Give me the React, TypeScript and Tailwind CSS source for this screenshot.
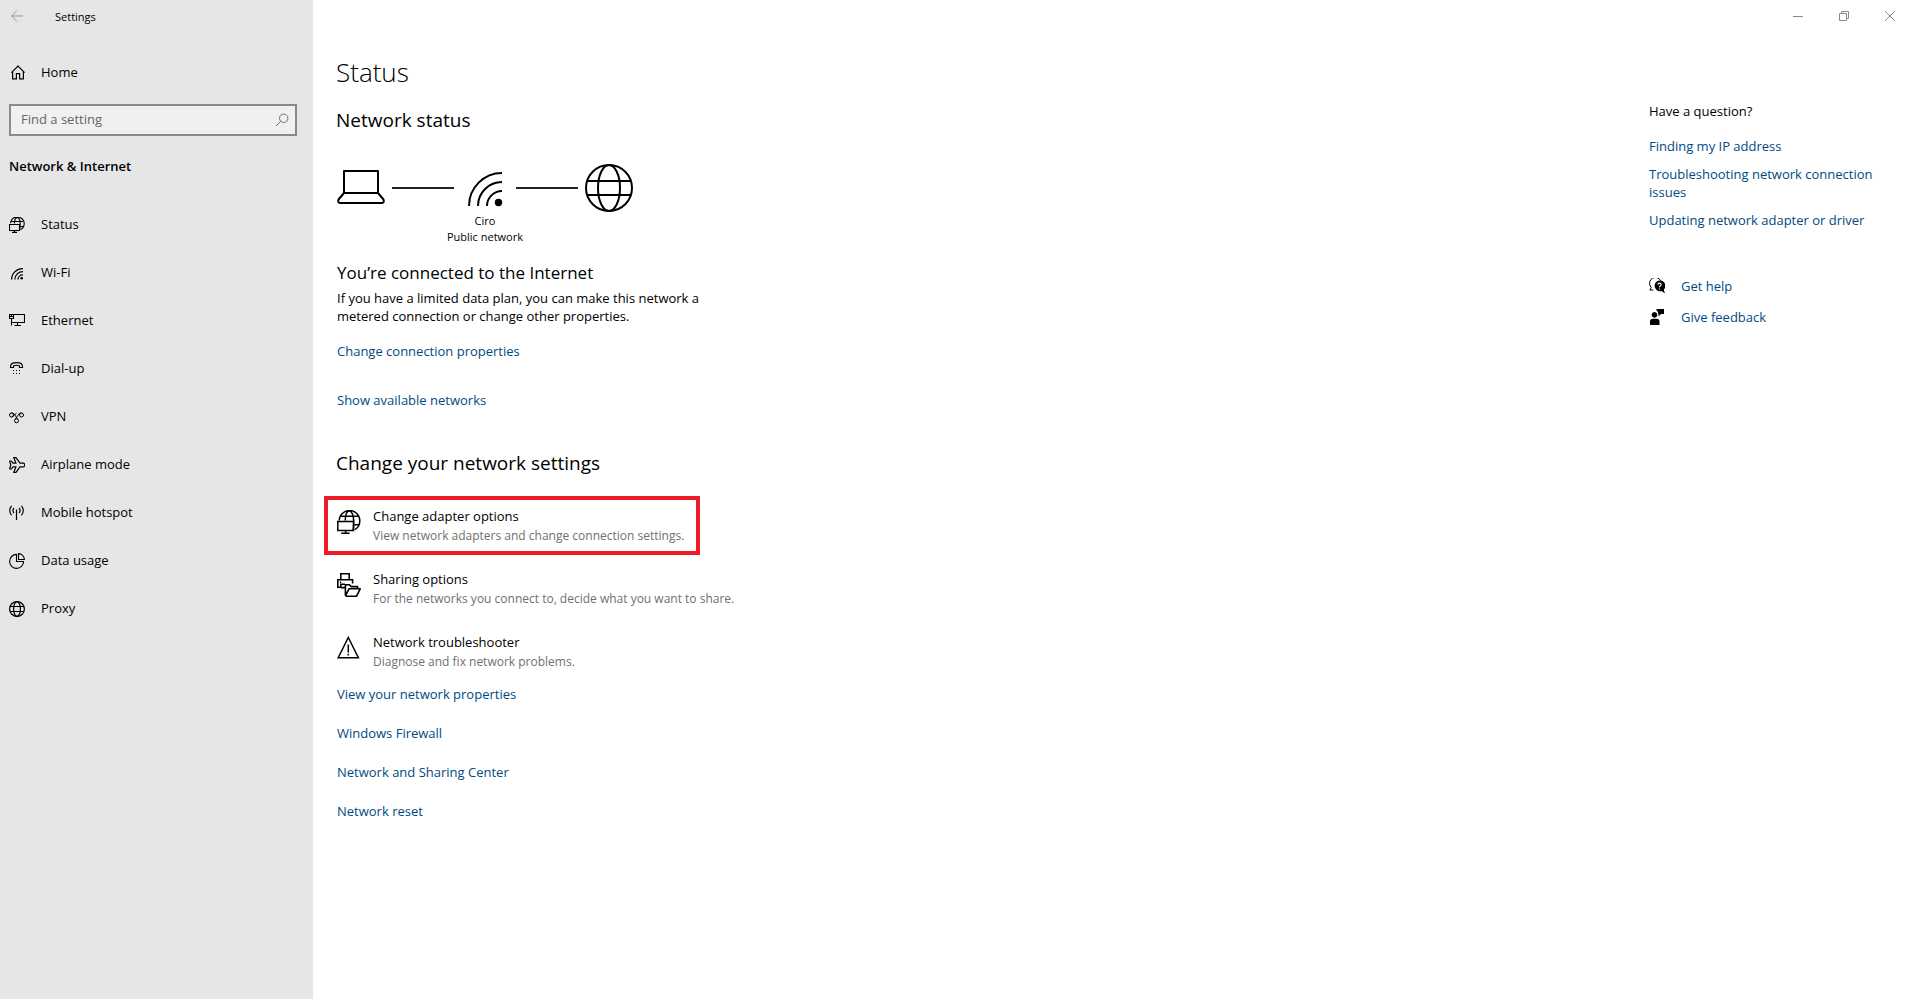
import type { ReactNode } from 'react';

type IconProps = { size?: number; stroke?: number; className?: string; children: ReactNode };

function Icon({ size = 16, stroke = 1, className = '', children }: IconProps) {
  return (
    <svg
      width={size}
      height={size}
      viewBox={`0 0 ${size} ${size}`}
      fill="none"
      stroke="currentColor"
      strokeWidth={stroke}
      className={`shrink-0 ${className}`}
      aria-hidden="true"
    >
      {children}
    </svg>
  );
}

const navItems: { label: string; icon: ReactNode }[] = [
  {
    label: 'Status',
    icon: (
      <Icon stroke={1.1}>
        <path d="M1.6 6.2A6.8 6.8 0 1 1 11.5 12.7M5.4 6.5C5.6 3 6.6 0.6 8.2 0.6S11.2 3 11.2 7C11.2 9.5 11 11.5 10.4 13M2.4 4.5H14M11.5 9.5H14.4" />
        <path d="M0.5 7.5H10.5V13.5H0.5ZM5.5 13.5V15.5M3 15.4H8" />
      </Icon>
    ),
  },
  {
    label: 'Wi-Fi',
    icon: (
      <Icon stroke={1.3}>
        <path d="M2.6 14.5A11 11 0 0 1 14 3.6M5.8 14.5A8 8 0 0 1 14 6.7M8.9 14.5A5 5 0 0 1 14 9.8" />
        <circle cx="12.7" cy="13.2" r="1.3" fill="currentColor" stroke="none" />
      </Icon>
    ),
  },
  {
    label: 'Ethernet',
    icon: (
      <Icon stroke={1.1}>
        <path d="M0.5 1.5H4.5V5.5H0.5ZM4.5 1.5H15.5V9.5H2.5M2.5 5.5V12.5M8.5 9.5V12.5M5.5 12.5H12M0.5 3.5H4.5M2.5 1.5V3.5" />
      </Icon>
    ),
  },
  {
    label: 'Dial-up',
    icon: (
      <Icon stroke={1.1}>
        <path d="M1.5 5.5C1.5 3 4 1.6 7.5 1.6S13.5 3 13.5 5.5V6.5H10.5V5C9 4.2 6 4.2 4.5 5V6.5H1.5Z" />
        <path d="M4 9.5H5M7 9.5H8M10 9.5H11M4 12.5H5M7 12.5H8M10 12.5H11" />
      </Icon>
    ),
  },
  {
    label: 'VPN',
    icon: (
      <Icon>
        <circle cx="2.5" cy="6" r="2" />
        <circle cx="12.5" cy="6" r="2" />
        <circle cx="7.5" cy="11.8" r="2" />
        <path d="M2.5 4C5.5 3.6 6 7 8.8 10.2M12.5 4C9.5 3.6 9 7 6.2 10.2M2.5 8C5 8 5.6 4.6 7.5 4.2" />
      </Icon>
    ),
  },
  {
    label: 'Airplane mode',
    icon: (
      <Icon stroke={1.2}>
        <path
          d="M0.7 4H2.3L4 6.2H7L4.7 0.6H7L11 6.2H14A1.8 1.8 0 0 1 14 9.8H11L7 15.4H4.7L7 9.8H4L2.3 12H0.7L1.7 8Z"
          strokeLinejoin="round"
        />
      </Icon>
    ),
  },
  {
    label: 'Mobile hotspot',
    icon: (
      <Icon stroke={1.2}>
        <path d="M7.5 4.5V15M5 3A3.8 3.8 0 0 0 5 8M10 3A3.8 3.8 0 0 1 10 8M2.6 0.8A7.2 7.2 0 0 0 2.6 10.4M12.4 0.8A7.2 7.2 0 0 1 12.4 10.4" />
      </Icon>
    ),
  },
  {
    label: 'Data usage',
    icon: (
      <Icon stroke={1.1}>
        <path d="M7.5 1.4A7 7 0 1 0 14.6 8.5H7.5ZM9.5 0.6A6.4 6.4 0 0 1 15.4 6.5H9.5Z" />
      </Icon>
    ),
  },
  {
    label: 'Proxy',
    icon: (
      <Icon stroke={1.2}>
        <circle cx="8" cy="8" r="7.4" />
        <ellipse cx="8" cy="8" rx="3.4" ry="7.4" />
        <path d="M1 5.5H15M1 10.5H15" />
      </Icon>
    ),
  },
];

const options: { title: string; detail: string; highlighted?: boolean; icon: ReactNode }[] = [
  {
    title: 'Change adapter options',
    detail: 'View network adapters and change connection settings.',
    highlighted: true,
    icon: (
      <Icon size={24} stroke={1.5}>
        <path d="M2.2 10.5A10.3 10.3 0 1 1 18 19.6M8.2 10.5C8.4 5 10 0.9 12.3 0.9S16.6 5 16.6 10.5C16.6 14 16.8 16.5 16 20M3.4 6.2H21.4M17.5 14.8H21.6" />
        <path d="M0.8 11.4H16.6V20.4H0.8ZM8.6 20.4V23.2M4.2 23.2H12.6" />
      </Icon>
    ),
  },
  {
    title: 'Sharing options',
    detail: 'For the networks you connect to, decide what you want to share.',
    icon: (
      <Icon size={24} stroke={1.6}>
        <path d="M3.8 6.8V0.8H12.2V6.8M4 14.2H0.8V6.8H15.6V10.5M3.8 15V11.2H8" />
        <path d="M2.8 9.2H4.2M3.8 14.6H8.2M8.4 22.8V11.8H12.5L14.2 13.6H20.6V15.6M8.4 22.8L12 15.8H23.2L19.6 23.2H8.4" strokeLinejoin="round" />
      </Icon>
    ),
  },
  {
    title: 'Network troubleshooter',
    detail: 'Diagnose and fix network problems.',
    icon: (
      <Icon size={24} stroke={1.5}>
        <path d="M11.3 1.5L21.4 21.7H1.2ZM11.3 8.5V16.5M11.3 17.8V19.4" />
      </Icon>
    ),
  },
];

const relatedLinks = ['View your network properties', 'Windows Firewall', 'Network and Sharing Center', 'Network reset'];
const helpLinks = ['Finding my IP address', 'Troubleshooting network connection issues', 'Updating network adapter or driver'];

function TextLink({ children }: { children: ReactNode }) {
  return (
    <a href="#" className="text-[#004a83] hover:text-gray-500">
      {children}
    </a>
  );
}

function Sidebar() {
  return (
    <aside className="w-[313px] shrink-0 bg-[#e6e6e6]">
      <div className="flex h-8 items-center gap-[30px] pl-[9px] text-[11px]">
        <button type="button" aria-label="Back" className="text-[#999999]">
          <Icon>
            <path d="M14 8H2.5M8 2.5L2.5 8L8 13.5" />
          </Icon>
        </button>
        <span className="pt-0.5">Settings</span>
      </div>
      <a href="#" className="mt-[17px] flex h-12 items-center gap-4 pl-[9px]">
        <Icon stroke={1.2}>
          <path d="M2.4 7.7L9 1.1L15.6 7.7M3.6 6.5V13.9H7.4V8.6H10.6V13.9H14.4V6.5" />
        </Icon>
        Home
      </a>
      <div className="mr-4 ml-[9px] mt-[7px] flex h-8 items-center border-2 border-[#8a8a8a] bg-[#f0f0f0] pr-[5px] pl-2.5">
        <input
          type="text"
          aria-label="Find a setting"
          placeholder="Find a setting"
          className="min-w-0 flex-1 bg-transparent outline-none placeholder:text-[#666666]"
        />
        <button type="button" aria-label="Search" className="text-[#707070]">
          <Icon>
            <circle cx="9.7" cy="6.3" r="4.2" />
            <path d="M6.7 9.3L2 14" />
          </Icon>
        </button>
      </div>
      <h2 className="mt-5 pl-[9px] leading-5 font-semibold">Network &amp; Internet</h2>
      <nav className="mt-[25px]">
        {navItems.map((item) => (
          <a key={item.label} href="#" className="flex h-12 items-center gap-4 pl-[9px]">
            {item.icon}
            {item.label}
          </a>
        ))}
      </nav>
    </aside>
  );
}

function WindowControls() {
  return (
    <div className="flex h-8 items-center justify-end gap-[30px] pr-3.5 text-[#8a8a8a]">
      <button type="button" aria-label="Minimize">
        <Icon>
          <path d="M3 8.5H13" />
        </Icon>
      </button>
      <button type="button" aria-label="Restore">
        <Icon>
          <path d="M3.5 5.5H10.5V12.5H3.5ZM5.5 5.5V3.5H12.5V10.5H10.5" />
        </Icon>
      </button>
      <button type="button" aria-label="Close">
        <Icon>
          <path d="M3 3L13 13M13 3L3 13" />
        </Icon>
      </button>
    </div>
  );
}

function ConnectionDiagram() {
  return (
    <div className="mt-[30px] ml-px w-[296px]">
      <div className="flex items-center justify-between">
        <Icon size={48} stroke={2}>
          <path d="M7 7H41V29H7ZM7 29L1.5 35.5Q0.6 39 3 39H45Q47.4 39 46.5 35.5L41 29" strokeLinejoin="round" />
        </Icon>
        <div className="h-0.5 w-[62px] bg-[#222222]" />
        <Icon size={48} stroke={2}>
          <path d="M8 42A33 33 0 0 1 41 9M17 42A24 24 0 0 1 41 18M26 42A15 15 0 0 1 41 27" />
          <circle cx="37.5" cy="38.5" r="3.7" fill="currentColor" stroke="none" />
        </Icon>
        <div className="h-0.5 w-[62px] bg-[#222222]" />
        <Icon size={48} stroke={2}>
          <circle cx="24" cy="24" r="23" />
          <ellipse cx="24" cy="24" rx="11" ry="23" />
          <path d="M2.5 17H45.5M2.5 31H45.5" />
        </Icon>
      </div>
      <p className="mt-px text-center text-[11px] leading-4">
        Ciro
        <br />
        Public network
      </p>
    </div>
  );
}

function HelpPane() {
  return (
    <aside className="w-[263px] shrink-0 pt-[70px] pr-6 leading-[18px]">
      <h2>Have a question?</h2>
      <ul className="mt-[17px] flex flex-col gap-2.5">
        {helpLinks.map((label) => (
          <li key={label}>
            <TextLink>{label}</TextLink>
          </li>
        ))}
      </ul>
      <ul className="mt-12 flex flex-col gap-[13px]">
        <li className="flex items-center gap-4">
          <Icon>
            <path d="M11.6 2.6A5.7 5.7 0 0 0 1.2 8L2.2 9.6L0.8 12H4.4" />
            <path
              d="M10.5 2.6A5.2 5.2 0 0 0 5.6 8A5.3 5.3 0 0 0 12.6 13L15.9 15.4L14.8 11.6A5.3 5.3 0 0 0 10.5 2.6Z"
              fill="currentColor"
              stroke="none"
            />
            <path d="M8.9 6.6Q9 5.1 10.6 5.2Q12.2 5.4 12 6.8Q11.8 7.5 11.1 8Q10.5 8.4 10.5 9.2M10.5 10.4V11.6" stroke="white" strokeWidth="1.2" />
          </Icon>
          <TextLink>Get help</TextLink>
        </li>
        <li className="flex items-center gap-4">
          <Icon>
            <path
              d="M7.5 0H15V5H12L9.6 7.4V5H9.2Q9.4 2.6 7.5 1.6ZM5.5 3A2.9 2.9 0 1 1 5.4 3ZM1 16V12.5Q1 9.8 4 9.8H7.5Q10.5 9.8 10.5 12.5V16Z"
              fill="currentColor"
              stroke="none"
            />
          </Icon>
          <TextLink>Give feedback</TextLink>
        </li>
      </ul>
    </aside>
  );
}

export default function App() {
  return (
    <div className="flex min-h-screen bg-white font-['Open_Sans','Noto_Sans',sans-serif] text-[13px] text-black">
      <Sidebar />
      <div className="flex min-w-0 flex-1 flex-col">
        <WindowControls />
        <div className="flex flex-1 justify-between">
          <main className="min-w-0 flex-1 pt-5 pl-[23px]">
            <h1 className="text-[26px] leading-10 font-light">Status</h1>
            <h2 className="mt-3.5 text-[19px] leading-7">Network status</h2>
            <ConnectionDiagram />
            <div className="ml-px">
              <h3 className="mt-4 text-[17px] leading-6">You’re connected to the Internet</h3>
              <p className="mt-1 max-w-[390px] leading-[18px]">
                If you have a limited data plan, you can make this network a metered connection or change other properties.
              </p>
              <p className="mt-[17px] leading-[18px]">
                <TextLink>Change connection properties</TextLink>
              </p>
              <p className="mt-[31px] leading-[18px]">
                <TextLink>Show available networks</TextLink>
              </p>
            </div>
            <h2 className="mt-10 text-[19px] leading-7">Change your network settings</h2>
            <ul className="-ml-3 mt-[19px] flex flex-col items-start gap-1">
              {options.map((option) => (
                <li key={option.title} className={option.highlighted ? 'border-4 border-[#ed1c24]' : 'border-4 border-transparent'}>
                  <a href="#" className="flex gap-3 pt-[7px] pr-3 pb-1.5 pl-[9px]">
                    <span className="pt-[3px]">{option.icon}</span>
                    <span className="flex flex-col gap-0.5">
                      <span className="leading-[18px]">{option.title}</span>
                      <span className="text-xs leading-[18px] text-[#707070]">{option.detail}</span>
                    </span>
                  </a>
                </li>
              ))}
            </ul>
            <ul className="mt-1 ml-px flex flex-col gap-[21px] leading-[18px]">
              {relatedLinks.map((label) => (
                <li key={label}>
                  <TextLink>{label}</TextLink>
                </li>
              ))}
            </ul>
          </main>
          <HelpPane />
        </div>
      </div>
    </div>
  );
}
